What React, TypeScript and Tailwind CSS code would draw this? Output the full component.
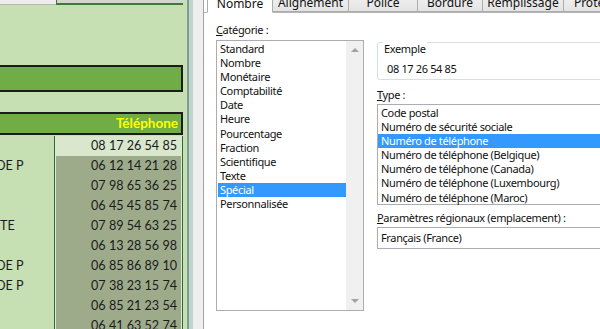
import React from 'react';

const ROWS = [
  { left: '', shift: '', num: '08 17 26 54 85' },
  { left: 'DE P', shift: '-ml-[4px]', num: '06 12 14 21 28' },
  { left: '', shift: '', num: '07 98 65 36 25' },
  { left: '', shift: '', num: '06 45 45 85 74' },
  { left: 'TE', shift: 'ml-0', num: '07 89 54 63 25' },
  { left: '', shift: '', num: '06 13 28 56 98' },
  { left: 'DE P', shift: '-ml-[4px]', num: '06 85 86 89 10' },
  { left: 'DE P', shift: '-ml-[4px]', num: '07 38 23 15 74' },
  { left: '', shift: '', num: '06 85 21 23 54' },
  { left: '', shift: '', num: '06 41 63 52 74' },
];

const TABS = [
  { label: 'Nombre', w: 'w-[66px]', active: true },
  { label: 'Alignement', w: 'w-[77px]', active: false },
  { label: 'Police', w: 'w-[70px]', active: false },
  { label: 'Bordure', w: 'w-[66px]', active: false },
  { label: 'Remplissage', w: 'w-[82px]', active: false },
  { label: 'Protection', w: 'w-[80px]', active: false },
];

const CATEGORIES = [
  'Standard', 'Nombre', 'Monétaire', 'Comptabilité', 'Date', 'Heure',
  'Pourcentage', 'Fraction', 'Scientifique', 'Texte', 'Spécial', 'Personnalisée',
];

const TYPES = [
  'Code postal',
  'Numéro de sécurité sociale',
  'Numéro de téléphone',
  'Numéro de téléphone (Belgique)',
  'Numéro de téléphone (Canada)',
  'Numéro de téléphone (Luxembourg)',
  'Numéro de téléphone (Maroc)',
];

function Sheet() {
  return (
    <div className="w-[187px] h-full shrink-0 bg-[#c6e0b4] font-['Lato',sans-serif] text-[12.6px] text-[#1b1b1b] overflow-hidden">
      {/* top row remnant */}
      <div className="flex h-[5px]">
        <div className="w-[56px] bg-[#ededed] border-b border-[#b8b8b8]" />
        <div className="w-[127px] bg-[#d3d6d0] border-l border-b-2 border-[#3d7a3a]" />
      </div>

      {/* title bar */}
      <div className="mt-[60px] w-[183px] h-[27px] bg-[#70ad47] border-y-2 border-r-2 border-[#1c1c1c]" />

      {/* header */}
      <div className="mt-[20px] w-[183px] h-[23px] bg-[#70ad47] border-y-2 border-r-2 border-[#1c1c1c] flex items-center justify-end pr-[3px]">
        <span className="font-bold text-[13.5px] text-[#ffff00] leading-none">Téléphone</span>
      </div>

      <div className="mt-[1px] flex flex-col">
        {ROWS.map((r, i) => (
          <div key={i} className="flex h-[20px]">
            <div className="w-[55px] overflow-hidden whitespace-nowrap flex items-center border-r border-[#2d6a33]">
              <span className={r.shift}>{r.left}</span>
            </div>
            <div
              className={`w-[127px] flex items-center justify-end pr-[4px] border-x border-[#dfe9d6] ${
                i === 0 ? 'bg-[#d9e7cc]' : 'bg-[#9dab8b]'
              }`}
            >
              {r.num}
            </div>
            <div className="w-px bg-[#2d6a33]" />
          </div>
        ))}
      </div>
    </div>
  );
}

function ScrollArrow({ up }: { up: boolean }) {
  return (
    <svg width="8" height="5" viewBox="0 0 8 5">
      <path d={up ? 'M0 5 L4 1 L8 5 Z' : 'M0 0 L4 4 L8 0 Z'} fill="#a3a3a3" />
    </svg>
  );
}

function Dialog() {
  return (
    <div className="flex-1 h-full bg-white border-l border-[#a3a3a3] font-['Noto_Sans',sans-serif] text-[11px] tracking-[-0.35px] text-[#111] overflow-hidden">
      {/* tabs */}
      <div className="-mt-[9px] pl-[3px] h-[22px] flex items-end border-b border-[#b5b5b5]">
        {TABS.map((t, i) => (
          <div
            key={t.label}
            className={`${t.w} shrink-0 h-[21px] flex justify-center pt-[2px] text-[12px] tracking-normal border border-[#acacac] ${
              i > 0 ? '-ml-px' : ''
            } ${
              t.active
                ? 'bg-white border-b-white -mb-px relative z-10'
                : 'bg-gradient-to-b from-[#f4f4f4] to-[#e4e4e4]'
            }`}
          >
            {t.label}
          </div>
        ))}
      </div>

      <div className="flex pl-[12px]">
        {/* category column */}
        <div className="w-[148px] shrink-0">
          <div className="mt-[10px] leading-[14px]">
            <span className="underline">C</span>atégorie :
          </div>
          <div className="mt-[3px] h-[271px] border border-[#abadb3] flex">
            <div className="flex-1 pt-[1px] pl-[1px]">
              {CATEGORIES.map((c) => (
                <div
                  key={c}
                  className={`h-[14.1px] leading-[14.1px] pl-[2px] ${
                    c === 'Spécial' ? 'bg-[#3399ff] text-white' : ''
                  }`}
                >
                  {c}
                </div>
              ))}
            </div>
            <div className="w-[17px] bg-[#f0f0f0] flex flex-col items-center justify-between py-[6px]">
              <ScrollArrow up />
              <ScrollArrow up={false} />
            </div>
          </div>
        </div>

        {/* right column */}
        <div className="ml-[13px] flex-1 min-w-[230px]">
          <div className="mt-[29px] relative h-[38px] border border-[#d5dfe5] rounded-[3px] pl-[9px] pt-[19px] leading-[14px]">
            <span className="absolute left-[5px] top-[-1px] bg-white px-[1px] leading-[14px]">Exemple</span>
            08 17 26 54 85
          </div>

          <div className="mt-[8px] leading-[14px]">
            <span className="underline">T</span>ype :
          </div>
          <div className="mt-[2px] h-[101px] border border-[#abadb3] pt-[1px]">
            {TYPES.map((t) => (
              <div
                key={t}
                className={`h-[14.1px] leading-[14.1px] pl-[3px] whitespace-nowrap ${
                  t === 'Numéro de téléphone' ? 'bg-[#3399ff] text-white' : ''
                }`}
              >
                {t}
              </div>
            ))}
          </div>

          <div className="mt-[6px] leading-[14px]">
            <span className="underline">P</span>aramètres régionaux (emplacement) :
          </div>
          <div className="mt-[2px] h-[22px] border border-[#abadb3] flex items-center pl-[3px]">
            Français (France)
          </div>
        </div>
      </div>
    </div>
  );
}

export default function App() {
  return (
    <div className="w-[600px] h-[329px] flex overflow-hidden bg-white">
      <Sheet />
      <div className="w-[2px] h-full bg-[#7f9c92]" />
      <div className="w-[4px] h-full bg-[#c0d5cf]" />
      <div className="w-[10px] h-full bg-[#eeeeee]" />
      <Dialog />
    </div>
  );
}
